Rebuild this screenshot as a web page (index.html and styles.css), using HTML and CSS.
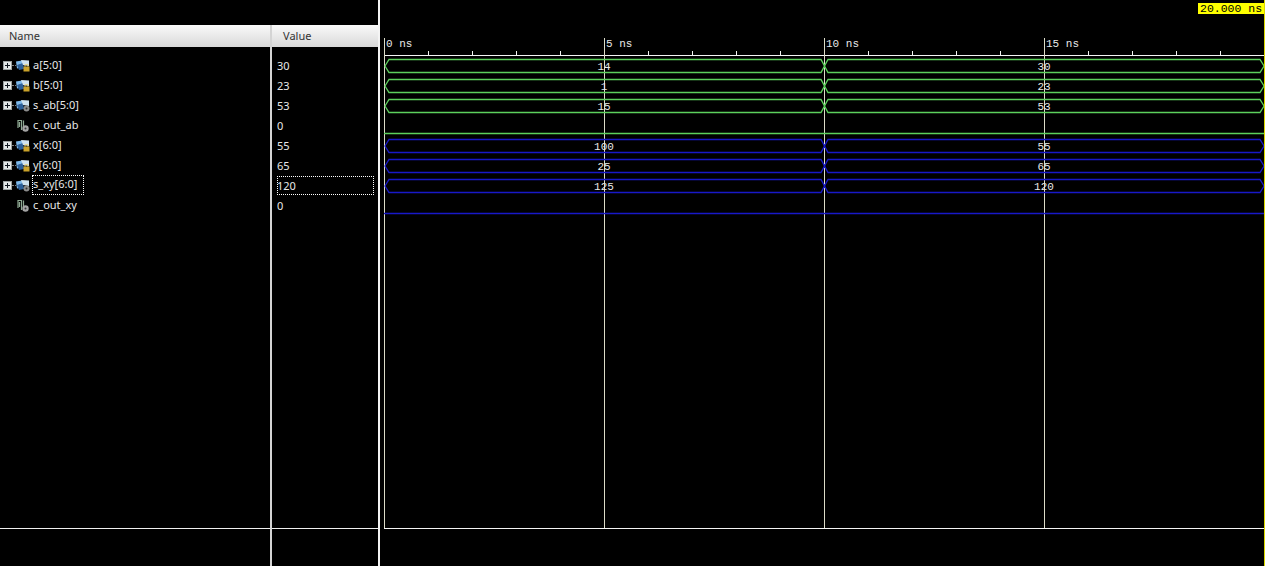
FILE: index.html
```html
<!DOCTYPE html>
<html lang="en">

<head>
 <meta charset="UTF-8">
 <title>Isim Waveform</title>
 <link rel="stylesheet" href="styles.css">
</head>

<body>

 <svg class="defs" width="0" height="0">
  <symbol id="expander" viewBox="0 0 9 9">
   <rect x="0.5" y="0.5" width="8" height="8" fill="#e4e8e8" stroke="#9aa0a0"/>
   <path d="M2 4.5H7M4.5 2V7" stroke="#101820" fill="none"/>
  </symbol>
  <symbol id="bus-in" viewBox="0 0 14 13">
   <path d="M0 2.5L6 1.5L7 8L1 9.5Z" fill="#7db8ea"/>
   <path d="M1 6L7 4L8 10L3 11Z" fill="#2c5f98"/>
   <path d="M5 1L13 1.5L13 7L7 6Z" fill="#cfe2f0"/>
   <rect x="7.5" y="7.5" width="6" height="5" fill="#c9a22a"/>
   <path d="M9 7.5V5.5H12V7.5" fill="none" stroke="#e8d890"/>
  </symbol>
  <symbol id="bus-out" viewBox="0 0 14 13">
   <path d="M0 2.5L6 1.5L7 8L1 9.5Z" fill="#7db8ea"/>
   <path d="M1 6L7 4L8 10L3 11Z" fill="#2c5f98"/>
   <path d="M5 1L13 1.5L13 7L7 6Z" fill="#cfe2f0"/>
   <circle cx="10.5" cy="9.5" r="3" fill="#8c8c8c"/>
   <circle cx="10.5" cy="9.5" r="1" fill="#333"/>
  </symbol>
  <symbol id="bit-out" viewBox="0 0 14 13">
   <path d="M2 9V1.5H5.5V11M3.5 8V3M7.5 9V1.5" fill="none" stroke="#8ea892" stroke-width="1.2"/>
   <circle cx="9.5" cy="9.5" r="3.2" fill="#a4a4a4"/>
   <circle cx="9.5" cy="9.5" r="1" fill="#333"/>
  </symbol>
 </svg>

 <div class="viewer">

  <div class="pane name-pane">
   <div class="pane-head"><div class="head-label">Name</div></div>
   <div class="rows">
    <div class="row"><svg class="expander"><use href="#expander"/></svg><span class="dots"></span><svg class="icon"><use href="#bus-in"/></svg><span class="signal">a[5:0]</span></div>
    <div class="row"><svg class="expander"><use href="#expander"/></svg><span class="dots"></span><svg class="icon"><use href="#bus-in"/></svg><span class="signal">b[5:0]</span></div>
    <div class="row"><svg class="expander"><use href="#expander"/></svg><span class="dots"></span><svg class="icon"><use href="#bus-out"/></svg><span class="signal">s_ab[5:0]</span></div>
    <div class="row row-leaf"><svg class="icon"><use href="#bit-out"/></svg><span class="signal">c_out_ab</span></div>
    <div class="row"><svg class="expander"><use href="#expander"/></svg><span class="dots"></span><svg class="icon"><use href="#bus-in"/></svg><span class="signal">x[6:0]</span></div>
    <div class="row"><svg class="expander"><use href="#expander"/></svg><span class="dots"></span><svg class="icon"><use href="#bus-in"/></svg><span class="signal">y[6:0]</span></div>
    <div class="row"><svg class="expander"><use href="#expander"/></svg><span class="dots"></span><svg class="icon"><use href="#bus-out"/></svg><span class="focus">s_xy[6:0]</span></div>
    <div class="row row-leaf"><svg class="icon"><use href="#bit-out"/></svg><span class="signal">c_out_xy</span></div>
   </div>
   <div class="pane-foot"></div>
  </div>

  <div class="pane value-pane">
   <div class="pane-head"><div class="head-label">Value</div></div>
   <div class="rows">
    <div class="row">30</div>
    <div class="row">23</div>
    <div class="row">53</div>
    <div class="row">0</div>
    <div class="row">55</div>
    <div class="row">65</div>
    <div class="row"><span class="focus-wide">120</span></div>
    <div class="row">0</div>
   </div>
   <div class="pane-foot"></div>
  </div>

  <svg class="wave" viewBox="380 0 885 566">
   <!-- time scale -->
   <path class="axis" d="M384 55.5H1265"/>
   <path class="axis" d="M428.5 51V55M472.5 51V55M516.5 51V55M560.5 51V55M648.5 51V55M692.5 51V55M736.5 51V55M780.5 51V55M868.5 51V55M912.5 51V55M956.5 51V55M1000.5 51V55M1088.5 51V55M1132.5 51V55M1176.5 51V55M1220.5 51V55"/>
   <path class="grid" d="M384.5 38V528M604.5 38V528M824.5 38V528M1044.5 38V528"/>
   <path class="axis" d="M384 528.5H1265"/>
   <text class="tick" x="386" y="47">0 ns</text>
   <text class="tick" x="606" y="47">5 ns</text>
   <text class="tick" x="826" y="47">10 ns</text>
   <text class="tick" x="1046" y="47">15 ns</text>

   <!-- a, b, s_ab -->
   <path class="sig green" d="M385 66L389 59.5H821L828 72.5H1260L1264 66L1260 59.5H828L821 72.5H389Z"/>
   <path class="sig green" d="M385 86L389 79.5H821L828 92.5H1260L1264 86L1260 79.5H828L821 92.5H389Z"/>
   <path class="sig green" d="M385 106L389 99.5H821L828 112.5H1260L1264 106L1260 99.5H828L821 112.5H389Z"/>
   <path class="sig green" d="M384 133.5H1265"/>

   <!-- x, y, s_xy -->
   <path class="sig blue" d="M385 146L389 139.5H821L828 152.5H1260L1264 146L1260 139.5H828L821 152.5H389Z"/>
   <path class="sig blue" d="M385 166L389 159.5H821L828 172.5H1260L1264 166L1260 159.5H828L821 172.5H389Z"/>
   <path class="sig blue" d="M385 186L389 179.5H821L828 192.5H1260L1264 186L1260 179.5H828L821 192.5H389Z"/>
   <path class="sig blue" d="M384 213.5H1265"/>

   <text class="val" x="604" y="70">14</text><text class="val" x="1044" y="70">30</text>
   <text class="val" x="604" y="90">1</text><text class="val" x="1044" y="90">23</text>
   <text class="val" x="604" y="110">15</text><text class="val" x="1044" y="110">53</text>
   <text class="val" x="604" y="150">100</text><text class="val" x="1044" y="150">55</text>
   <text class="val" x="604" y="170">25</text><text class="val" x="1044" y="170">65</text>
   <text class="val" x="604" y="190">125</text><text class="val" x="1044" y="190">120</text>

   <!-- cursor -->
   <path class="cursor" d="M1264.5 0V566"/>
   <rect class="cursor-box" x="1198" y="3" width="66" height="11"/>
   <text class="cursor-label" x="1200" y="12">20.000 ns</text>
  </svg>

 </div>

</body>

</html>
```

FILE: styles.css
```css
html,
body {
  margin: 0;
  height: 100%;
  overflow: hidden;
  background-color: #000;
}

.defs {
  display: block;
  height: 0;
}

.viewer {
  display: flex;
  width: 1265px;
  height: 566px;
  background-color: #000;
  color: #e8e8e8;
  font-family: "Noto Sans", Tahoma, sans-serif;
  font-size: 11px;
}

.pane {
  display: flex;
  flex-direction: column;
  box-sizing: border-box;
}

.name-pane {
  width: 272px;
  margin-top: 25px;
  border-right: 2px solid #d4d4d4;
}

.value-pane {
  width: 108px;
  padding-top: 25px;
  border-right: 2px solid #f4f4f4;
}

.pane-head {
  height: 22px;
  flex-shrink: 0;
  background: linear-gradient(#fafafa, #d9d9d9);
  color: #333;
}

.head-label {
  padding: 3px 0 0 9px;
}

.value-pane .head-label {
  padding-left: 11px;
}

.rows {
  flex: 1;
  padding-top: 8px;
}

.row {
  display: flex;
  align-items: center;
  height: 20px;
  white-space: nowrap;
}

.name-pane .row {
  padding-left: 3px;
}

.name-pane .row-leaf {
  padding-left: 16px;
}

.value-pane .row {
  padding-left: 5px;
}

.signal {
  margin-bottom: 2px;
}

.expander {
  width: 9px;
  height: 9px;
  flex-shrink: 0;
}

.dots {
  width: 4px;
  border-top: 1px dotted #808080;
}

.icon {
  width: 14px;
  height: 13px;
  flex-shrink: 0;
  margin-right: 3px;
}

.focus {
  box-sizing: border-box;
  height: 20px;
  line-height: 16px;
  margin-left: -1px;
  padding-right: 6px;
  border: 1px dotted #fff;
}

.focus-wide {
  box-sizing: border-box;
  width: 97px;
  height: 19px;
  line-height: 17px;
  margin-top: 1px;
  text-indent: -1px;
  border: 1px dotted #fff;
}

.pane-foot {
  height: 38px;
  flex-shrink: 0;
  border-top: 1px solid #f0f0f0;
  box-sizing: border-box;
}

.wave {
  display: block;
  width: 885px;
  height: 566px;
}

.axis {
  stroke: #f4f4f4;
  fill: none;
}

.grid {
  stroke: #dcdcc8;
  fill: none;
}

.sig {
  fill: none;
  stroke-width: 1.3;
}

.green {
  stroke: #5cd05c;
}

.blue {
  stroke: #1818c8;
}

.tick,
.val,
.cursor-label {
  font-family: "Liberation Mono", "Courier New", monospace;
  font-size: 11px;
}

.tick,
.val {
  fill: #e8e8e8;
}

.val {
  text-anchor: middle;
}

.cursor {
  stroke: #d8d800;
  fill: none;
}

.cursor-box {
  fill: #ffff00;
}

.cursor-label {
  fill: #000;
  font-size: 11.5px;
}
```
